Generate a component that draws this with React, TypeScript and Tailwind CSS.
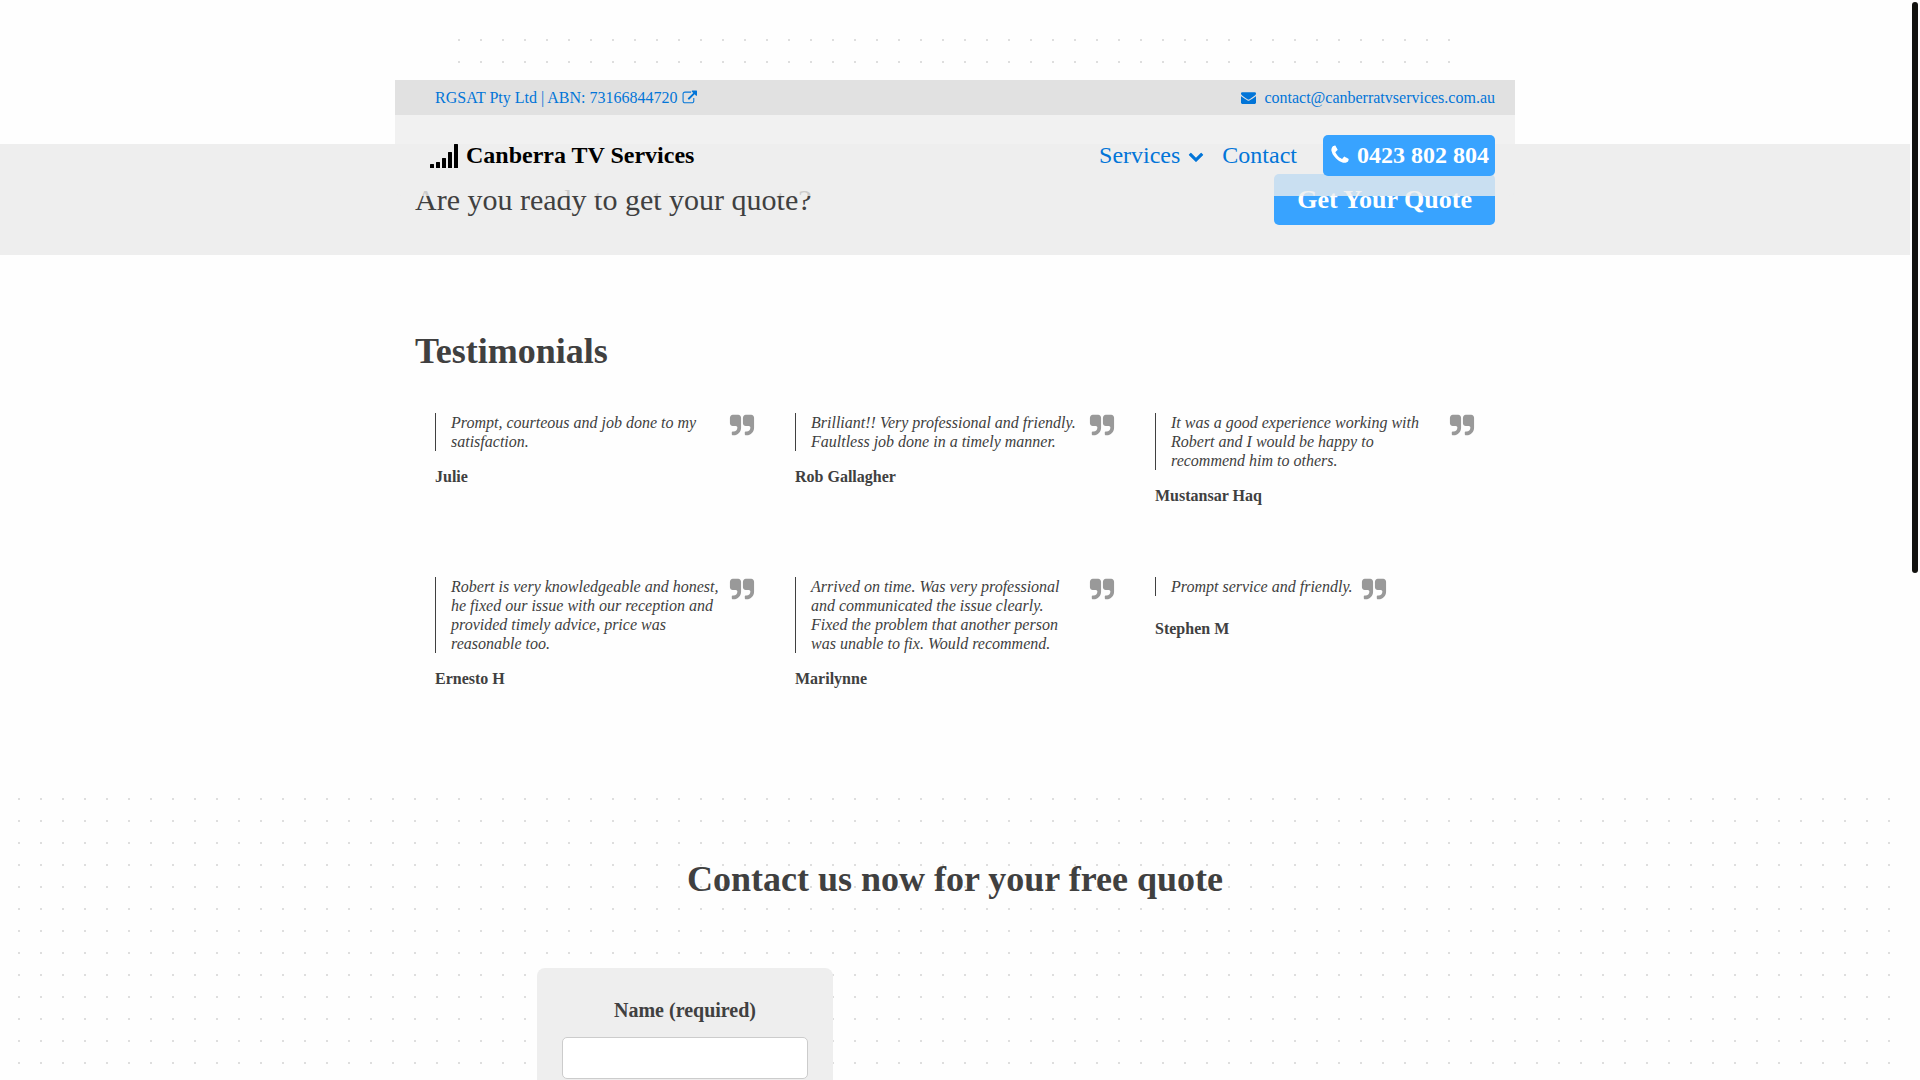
import type { ReactNode } from "react";

type IconProps = { className?: string };

function Glyph({ d, className }: IconProps & { d: string }) {
  return (
    <svg aria-hidden="true" viewBox="0 0 1792 1792" fill="currentColor" className={className}>
      <path d={d} />
    </svg>
  );
}

const ENVELOPE =
  "M1792 710v794q0 66-47 113t-113 47h-1472q-66 0-113-47t-47-113v-794q44 49 101 87 362 246 497 345 57 42 92.5 65.500t94.500 48 110 24.500h2q51 0 110-24.500t94.500-48 92.500-65.500q170-123 498-345 57-39 100-87zM1792 416q0 79-49 151t-122 123q-376 261-468 325-10 7-42.500 31t-54 38.500-52 32.500-57.500 27-50 9h-2q-23 0-50-9t-57.500-27-52-32.500-54-38.500-42.500-31q-91-64-262-182.500t-205-142.500q-62-42-117-115.500t-55-136.500q0-78 41.500-130t118.500-52h1472q65 0 112.500 47t47.500 113z";
const PHONE =
  "M1600 1240q0 27-10 70.500t-21 68.500q-21 50-122 106-94 51-186 51-27 0-53-3.500t-57.500-12.500-47-14.500-55.500-20.500-49-18q-98-35-175-83-127-79-264-216t-216-264q-48-77-83-175-3-9-18-49t-20.500-55.500-14.500-47-12.500-57.500-3.500-53q0-92 51-186 56-101 106-122 25-11 68.500-21t70.500-10q14 0 21 3 18 6 53 76 11 19 30 54t35 63.500 31 53.500q3 4 17.500 25t21.500 35.500 7 28.500q0 20-28.500 50t-62 55-62 53-28.500 46q0 9 5 22.500t8.500 20.500 14 24 11.500 19q76 137 174 235t235 174q2 1 19 11.500t24 14 20.500 8.500 22.500 5q18 0 46-28.500t53-62 55-62 50-28.500q14 0 28.500 7t35.500 21.500 25 17.500q25 15 53.500 31t63.500 35 54 30q70 35 76 53 3 7 3 21z";
const QUOTE =
  "M832 320v704q0 104-40.500 198.500t-109.500 163.500-163.500 109.500-198.500 40.500h-64q-26 0-45-19t-19-45v-128q0-26 19-45t45-19h64q106 0 181-75t75-181v-32q0-40-28-68t-68-28h-224q-80 0-136-56t-56-136v-384q0-80 56-136t136-56h384q80 0 136 56t56 136zm896 0v704q0 104-40.500 198.500t-109.500 163.500-163.500 109.500-198.500 40.500h-64q-26 0-45-19t-19-45v-128q0-26 19-45t45-19h64q106 0 181-75t75-181v-32q0-40-28-68t-68-28h-224q-80 0-136-56t-56-136v-384q0-80 56-136t136-56h384q80 0 136 56t56 136z";
const EXTERNAL =
  "M1472 989v320q0 119-84.500 203.500t-203.500 84.500h-832q-119 0-203.500-84.500t-84.500-203.500v-832q0-119 84.500-203.500t203.500-84.500h704q14 0 23 9t9 23v64q0 14-9 23t-23 9h-704q-66 0-113 47t-47 113v832q0 66 47 113t113 47h832q66 0 113-47t47-113v-320q0-14 9-23t23-9h64q14 0 23 9t9 23zm320-864v512q0 26-19 45t-45 19-45-19l-176-176-652 652q-10 10-23 10t-23-10l-114-114q-10-10-10-23t10-23l652-652-176-176q-19-19-19-45t19-45 45-19h512q26 0 45 19t19 45z";
const CHEVRON =
  "M1683 808l-742 741q-19 19-45 19t-45-19l-742-741q-19-19-19-45.500t19-45.500l166-165q19-19 45-19t45 19l531 531 531-531q19-19 45-19t45 19l166 165q19 19 19 45.500t-19 45.500z";

function SignalIcon({ className }: IconProps) {
  return (
    <svg aria-hidden="true" viewBox="0 0 28 24" fill="currentColor" className={className}>
      <rect x="0" y="20" width="4" height="4" rx="0.5" />
      <rect x="6" y="18" width="4" height="6" rx="0.5" />
      <rect x="12" y="14" width="4" height="10" rx="0.5" />
      <rect x="18" y="8" width="4" height="16" rx="0.5" />
      <rect x="24" y="0" width="4" height="24" rx="0.5" />
    </svg>
  );
}

const testimonials = [
  { quote: "Prompt, courteous and job done to my satisfaction.", name: "Julie" },
  {
    quote: "Brilliant!! Very professional and friendly. Faultless job done in a timely manner.",
    name: "Rob Gallagher",
  },
  {
    quote: "It was a good experience working with Robert and I would be happy to recommend him to others.",
    name: "Mustansar Haq",
  },
  {
    quote:
      "Robert is very knowledgeable and honest, he fixed our issue with our reception and provided timely advice, price was reasonable too.",
    name: "Ernesto H",
  },
  {
    quote:
      "Arrived on time. Was very professional and communicated the issue clearly. Fixed the problem that another person was unable to fix. Would recommend.",
    name: "Marilynne",
  },
  { quote: "Prompt service and friendly.", name: "Stephen M" },
];

// 2px square dots on a 22px grid
const DOTS =
  "bg-[conic-gradient(from_270deg_at_2px_2px,#dedede_90deg,transparent_0)] bg-[length:22px_22px] bg-[position:18px_18px]";

function Container({ children, className = "" }: { children: ReactNode; className?: string }) {
  return <div className={`mx-auto w-full max-w-[1120px] px-5 ${className}`}>{children}</div>;
}

function Header() {
  return (
    <header className="absolute inset-x-0 top-20 z-10">
      <div className="mx-auto max-w-[1120px] overflow-hidden rounded-b-md">
        <div className="flex h-[35px] items-center justify-between bg-[#e1e1e1] pr-5 pl-10 text-base text-[#0275d8]">
          <a href="#abn" className="flex items-center gap-1">
            RGSAT Pty Ltd | ABN: 73166844720
            <Glyph d={EXTERNAL} className="size-[15px]" />
          </a>
          <a href="mailto:contact@canberratvservices.com.au" className="flex items-center gap-2">
            <Glyph d={ENVELOPE} className="size-[15px]" />
            contact@canberratvservices.com.au
          </a>
        </div>
        <div className="flex items-start justify-between bg-[rgba(237,237,237,0.8)] pt-5 pr-5 pb-[19px] pl-[35px] text-2xl">
          <a href="#home" className="flex h-[42px] items-center gap-2 font-bold text-black">
            <SignalIcon className="h-6 w-7" />
            <span className="pb-0.5">Canberra TV Services</span>
          </a>
          <nav className="flex h-[41px] items-center text-[#0275d8]">
            <button type="button" className="flex items-center gap-2 pb-0.5">
              Services
              <Glyph d={CHEVRON} className="mt-0.5 size-4" />
            </button>
            <a href="#contact" className="ml-[18px] pb-0.5">
              Contact
            </a>
            <a
              href="tel:0423802804"
              className="ml-[26px] flex h-full items-center gap-1.5 rounded-[5px] bg-[#38a3ff] px-1.5 pb-0.5 font-bold text-white"
            >
              <Glyph d={PHONE} className="size-[22px]" />
              0423 802 804
            </a>
          </nav>
        </div>
      </div>
    </header>
  );
}

function Testimonial({ quote, name }: { quote: string; name: string }) {
  return (
    <figure className="p-5 leading-[19px]">
      <div className="flex items-start">
        <blockquote className="border-l border-[#404040] pl-[15px] italic">{quote}</blockquote>
        <Glyph d={QUOTE} className="ml-2 size-[26px] shrink-0 text-[#999]" />
      </div>
      <figcaption className="mt-4 font-bold">{name}</figcaption>
    </figure>
  );
}

export default function App() {
  return (
    <div className="relative h-screen overflow-hidden bg-[#fefefe] font-['Liberation_Serif',serif] text-base text-[#404040]">
      <div className="relative mr-[10px]">
        <Header />

        <div className="flex h-36 justify-center pt-[21px]">
          <div className={`h-[60px] w-full max-w-[1030px] ${DOTS}`} />
        </div>

        <section className="bg-[#eee]">
          <Container className="flex items-center justify-between py-[30px]">
            <p className="text-3xl">Are you ready to get your quote?</p>
            <a
              href="#contact"
              className="flex h-[51px] items-center rounded-[5px] bg-[#38a3ff] px-[23px] text-[26px] font-bold text-white"
            >
              Get Your Quote
            </a>
          </Container>
        </section>

        <section className="pt-[76px] pb-[72px]">
          <Container>
            <h2 className="text-4xl font-bold">Testimonials</h2>
            <div className="mt-[22px] grid grid-cols-3 gap-y-8">
              {testimonials.map((t) => (
                <Testimonial key={t.name} quote={t.quote} name={t.name} />
              ))}
            </div>
          </Container>
        </section>

        <section id="contact" className={`pt-[79px] pb-20 ${DOTS}`}>
          <Container>
            <h2 className="text-center text-4xl font-bold">Contact us now for your free quote</h2>
            <div className="mt-[69px] grid grid-cols-2">
              <form className="mx-auto w-[296px] rounded-lg bg-[#eee] px-[25px] pt-7 pb-[25px]">
                <label htmlFor="name" className="block text-center text-xl font-bold">
                  Name (required)
                </label>
                <input
                  id="name"
                  type="text"
                  className="mt-[13px] h-[42px] w-full rounded-[5px] border border-[#ccc] bg-white px-3"
                />
              </form>
            </div>
          </Container>
        </section>
      </div>
      <div className="absolute top-0.5 right-0.5 h-[571px] w-1.5 rounded-full bg-[#12120f]" />
    </div>
  );
}
